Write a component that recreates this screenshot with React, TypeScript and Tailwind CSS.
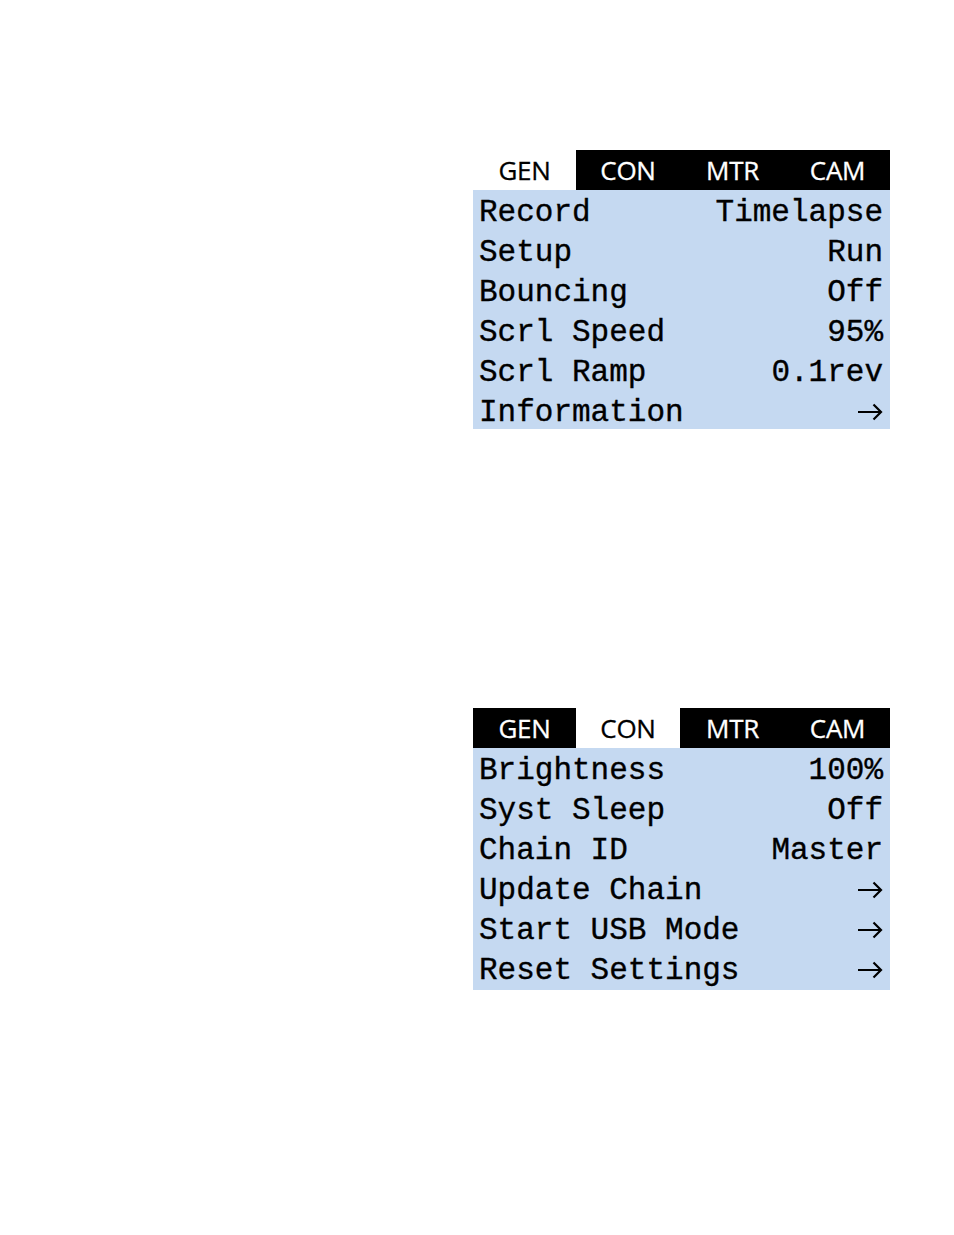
import React from 'react';

type Row = { label: string; value: string };

const tabs = ['GEN', 'CON', 'MTR', 'CAM'];

const Arrow = () => (
  <svg width="26" height="18" viewBox="0 0 26 18" className="mt-[-2px]">
    <path d="M1 9 H24 M16.5 1.5 L24 9 L16.5 16.5" fill="none" stroke="#000" strokeWidth="2.2" strokeLinecap="butt" />
  </svg>
);

const Panel = ({ active, rows, height }: { active: number; rows: Row[]; height: string }) => {
  return (
    <div className="w-[417px]">
      <div className="grid grid-cols-[103px_104px_105px_105px] h-[38px]">
        {tabs.map((t, i) => (
          <div
            key={t}
            className={`flex items-center justify-center pt-[1px] text-[26px] font-['Open_Sans',sans-serif] tracking-[-0.3px] [-webkit-text-stroke:0.3px_currentColor] ${
              i === active ? 'bg-white text-black' : 'bg-black text-white'
            }`}
          >
            {t}
          </div>
        ))}
      </div>
      <div className={`bg-[#c5d9f1] pt-[5px] pl-[6px] pr-[7px] overflow-hidden ${height}`}>
        {rows.map(r => (
          <div
            key={r.label}
            className="flex h-10 items-center justify-between font-['Liberation_Mono',monospace] text-[31px] leading-[40px] text-black whitespace-pre [-webkit-text-stroke:0.35px_black]"
          >
            <span>{r.label}</span>
            {r.value === '->' ? <Arrow /> : <span>{r.value}</span>}
          </div>
        ))}
      </div>
    </div>
  );
};

const App = () => {
  const general: Row[] = [
    { label: 'Record', value: 'Timelapse' },
    { label: 'Setup', value: 'Run' },
    { label: 'Bouncing', value: 'Off' },
    { label: 'Scrl Speed', value: '95%' },
    { label: 'Scrl Ramp', value: '0.1rev' },
    { label: 'Information', value: '->' },
  ];

  const controller: Row[] = [
    { label: 'Brightness', value: '100%' },
    { label: 'Syst Sleep', value: 'Off' },
    { label: 'Chain ID', value: 'Master' },
    { label: 'Update Chain', value: '->' },
    { label: 'Start USB Mode', value: '->' },
    { label: 'Reset Settings', value: '->' },
  ];

  return (
    <div className="min-h-[1235px] w-[954px] bg-white pl-[473px] pt-[150px] flex flex-col gap-[279px]">
      <Panel active={0} rows={general} height="h-[241px]" />
      <Panel active={1} rows={controller} height="h-[244px]" />
    </div>
  );
};

export default App;
